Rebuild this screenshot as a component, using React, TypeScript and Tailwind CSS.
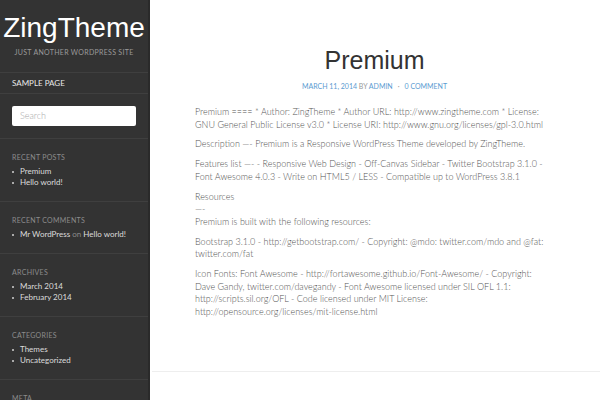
const sections = [
  { title: "Recent Posts", items: [["Premium"], ["Hello world!"]] },
  { title: "Recent Comments", items: [["Mr WordPress", "on", "Hello world!"]] },
  { title: "Archives", items: [["March 2014"], ["February 2014"]] },
  { title: "Categories", items: [["Themes"], ["Uncategorized"]] },
  { title: "Meta", items: [["Log in"], ["Entries RSS"]] },
];

const paragraphs = [
  ["Premium ==== * Author: ZingTheme * Author URL: http://www.zingtheme.com * License: GNU General Public License v3.0 * License URI: http://www.gnu.org/licenses/gpl-3.0.html"],
  ["Description —- Premium is a Responsive WordPress Theme developed by ZingTheme."],
  ["Features list —- - Responsive Web Design - Off-Canvas Sidebar - Twitter Bootstrap 3.1.0 - Font Awesome 4.0.3 - Write on HTML5 / LESS - Compatible up to WordPress 3.8.1"],
  ["Resources", "—-", "Premium is built with the following resources:"],
  ["Bootstrap 3.1.0 - http://getbootstrap.com/ - Copyright: @mdo: twitter.com/mdo and @fat: twitter.com/fat"],
  ["Icon Fonts: Font Awesome - http://fortawesome.github.io/Font-Awesome/ - Copyright: Dave Gandy, twitter.com/davegandy - Font Awesome licensed under SIL OFL 1.1: http://scripts.sil.org/OFL - Code licensed under MIT License: http://opensource.org/licenses/mit-license.html"],
];

function Sidebar() {
  return (
    <aside className="w-[150px] h-[400px] shrink-0 overflow-hidden bg-[#333333] border-r-2 border-[#2a2a2a] font-['Lato',sans-serif]">
      <div className="pt-[12px] pb-[15px] text-center border-b border-[#3f3f3f]">
        <h1 className="text-[28px] leading-[32px] text-white font-['Liberation_Sans',sans-serif]">ZingTheme</h1>
        <p className="mt-[4px] text-[7px] leading-[9px] uppercase tracking-[0.3px] text-[#9a9a9a]">Just another WordPress site</p>
      </div>
      <div className="h-[21px] flex items-center px-3 border-b border-[#3f3f3f]">
        <span className="text-[8px] uppercase text-[#e8e8e8]">Sample Page</span>
      </div>
      <div className="pt-[12px] pb-[12px] px-3 border-b border-[#3f3f3f]">
        <div className="h-[20px] rounded-[2px] bg-white flex items-center px-[8px]">
          <span className="text-[9px] font-light text-[#a8a8a8]">Search</span>
        </div>
      </div>
      {sections.map((section) => (
        <div key={section.title} className="pt-[14px] pb-[13px] px-3 border-b border-[#3f3f3f]">
          <h3 className="text-[7px] leading-[8px] uppercase tracking-[0.3px] text-[#8c8c8c]">{section.title}</h3>
          <ul className="mt-[5px]">
            {section.items.map((item) => (
              <li key={item.join()} className="flex items-center gap-[6px] text-[8px] leading-[11px] whitespace-nowrap text-[#dcdcdc]">
                <span className="w-[2px] h-[2px] bg-[#aaaaaa]" />
                {item.length === 1 ? (
                  <span>{item[0]}</span>
                ) : (
                  <span>
                    {item[0]} <span className="text-[#8c8c8c]">{item[1]}</span> {item[2]}
                  </span>
                )}
              </li>
            ))}
          </ul>
        </div>
      ))}
    </aside>
  );
}

export default function App() {
  return (
    <div className="flex w-[600px] h-[400px] overflow-hidden bg-white">
      <Sidebar />
      <main className="flex-1 h-[400px] font-['Lato',sans-serif]">
        <div className="pl-[43px] pr-[46px] pt-[44px] h-[372px] border-b border-[#eeeeee] ml-[2px]">
          <h2 className="text-center text-[25px] leading-[32px] text-[#333333] font-['Liberation_Sans',sans-serif]">Premium</h2>
          <div className="mt-[5px] text-center text-[7px] leading-[10px] uppercase text-[#999999]">
            <span className="text-[#5b9bd1]">March 11, 2014</span> by{" "}
            <span className="text-[#5b9bd1]">Admin</span>
            <span className="mx-[5px]">·</span>
            <span className="text-[#5b9bd1]">0 Comment</span>
          </div>
          <div className="mt-[15px] pr-[8px] text-[9px] leading-[12.7px] font-light text-[#555555]">
            {paragraphs.map((lines, i) => (
              <p key={i} className="mb-[7px]">
                {lines.map((line, j) => (
                  <span key={j}>
                    {j > 0 && <br />}
                    {line}
                  </span>
                ))}
              </p>
            ))}
          </div>
        </div>
      </main>
    </div>
  );
}
